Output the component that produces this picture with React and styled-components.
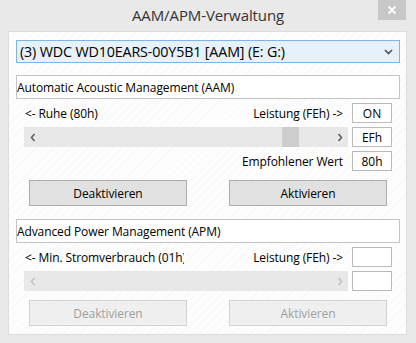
import React from "react";
import styled, { createGlobalStyle } from "styled-components";

const Global = createGlobalStyle`
  html, body { margin: 0; padding: 0; background: #e9e9e9; }
  * { box-sizing: border-box; }
  body { font-family: "Open Sans", "Noto Sans", sans-serif; }
`;

const Window = styled.div`
  width: 416px;
  height: 343px;
  background: #e9e9e9;
  display: flex;
  flex-direction: column;
  overflow: hidden;
`;

const TitleBar = styled.div`
  height: 31px;
  display: grid;
  grid-template-columns: 1fr auto 1fr;
  align-items: start;
`;

const Title = styled.div`
  grid-column: 2;
  font-size: 15px;
  color: #333;
  line-height: 31px;
  letter-spacing: -0.1px;
`;

const CloseButton = styled.div`
  grid-column: 3;
  justify-self: end;
  margin-right: 10px;
  width: 28px;
  height: 20px;
  background: #c7c7c7;
  display: flex;
  align-items: center;
  justify-content: center;
`;

const Client = styled.div`
  flex: 1;
  margin: 0 9px 8px 8px;
  border: 1px solid #dcdcdc;
  background-color: #fdfdfd;
  background-image: repeating-linear-gradient(
    135deg,
    rgba(0, 0, 0, 0) 0px,
    rgba(0, 0, 0, 0) 5px,
    rgba(0, 0, 0, 0.018) 5px,
    rgba(0, 0, 0, 0.018) 6px
  );
  padding: 8px 6px 0 7px;
  display: flex;
  flex-direction: column;
`;

const Combo = styled.div`
  height: 23px;
  border: 1px solid #7eb4ea;
  background: #e5f1fb;
  display: flex;
  align-items: center;
  justify-content: space-between;
  padding: 0 6px 0 3px;
  font-size: 14.3px;
  color: #000;
  letter-spacing: -0.15px;
`;

const GroupHeader = styled.div`
  height: 24px;
  margin-top: ${(p) => p.$top}px;
  border: 1px solid #c4c4c4;
  background: #fff;
  display: flex;
  align-items: center;
  padding-left: 0px;
  font-size: 12px;
  color: #000;
  letter-spacing: -0.1px;
`;

const Grid = styled.div`
  margin: 4px 0 0 8px;
  display: grid;
  grid-template-columns: 324px 40px;
  grid-auto-rows: 20px;
  column-gap: 4px;
  row-gap: 4px;
`;

const LabelRow = styled.div`
  display: flex;
  align-items: center;
  justify-content: ${(p) => (p.$end ? "flex-end" : "space-between")};
  padding: 0 5px 0 1px;
  font-size: 12px;
  color: #000;
  white-space: nowrap;
  letter-spacing: -0.1px;
`;

const Clip = styled.span`
  display: inline-block;
  width: ${(p) => p.$w}px;
  overflow: hidden;
`;

const ValueBox = styled.div`
  border: 1px solid #b9b9b9;
  background: #fff;
  display: flex;
  align-items: center;
  justify-content: center;
  font-size: 12px;
  color: #000;
`;

const Scroll = styled.div`
  background: #e8e8e8;
  display: grid;
  grid-template-columns: 17px 1fr 17px;
  align-items: center;
`;

const Track = styled.div`
  height: 100%;
  display: flex;
  justify-content: flex-start;
`;

const Thumb = styled.div`
  width: 17px;
  height: 100%;
  margin-left: ${(p) => p.$pos}px;
  background: #cdcdcd;
`;

const Arrow = styled.div`
  display: flex;
  justify-content: center;
  align-items: center;
`;

const ButtonRow = styled.div`
  margin: 9px 0 0 13px;
  display: flex;
  gap: 42px;
`;

const Button = styled.div`
  width: 158px;
  height: 26px;
  border: 1px solid ${(p) => (p.$disabled ? "#d2d2d2" : "#adadad")};
  background: ${(p) => (p.$disabled ? "#efefef" : "#e1e1e1")};
  color: ${(p) => (p.$disabled ? "#9f9f9f" : "#000")};
  display: flex;
  align-items: center;
  justify-content: center;
  font-size: 12px;
  letter-spacing: -0.1px;
`;

const Chevron = ({ dir, color }) => (
  <svg width="6" height="9" viewBox="0 0 6 9">
    <path
      d={dir === "left" ? "M4.5 1 L1.5 4.5 L4.5 8" : "M1.5 1 L4.5 4.5 L1.5 8"}
      fill="none"
      stroke={color}
      strokeWidth="1.6"
    />
  </svg>
);

const ScrollBar = ({ disabled, pos }) => {
  const c = disabled ? "#c2c2c2" : "#606060";
  return (
    <Scroll>
      <Arrow>
        <Chevron dir="left" color={c} />
      </Arrow>
      <Track>{!disabled && <Thumb $pos={pos} />}</Track>
      <Arrow>
        <Chevron dir="right" color={c} />
      </Arrow>
    </Scroll>
  );
};

export default function App() {
  return (
    <>
      <Global />
      <Window>
        <TitleBar>
          <Title>AAM/APM-Verwaltung</Title>
          <CloseButton>
            <svg width="10" height="10" viewBox="0 0 10 10">
              <path d="M1.5 1.5 L8.5 8.5 M8.5 1.5 L1.5 8.5" stroke="#fff" strokeWidth="1.8" />
            </svg>
          </CloseButton>
        </TitleBar>
        <Client>
          <Combo>
            <span>(3) WDC WD10EARS-00Y5B1 [AAM] (E: G:)</span>
            <svg width="9" height="6" viewBox="0 0 9 6">
              <path d="M1 1 L4.5 4.5 L8 1" fill="none" stroke="#555" strokeWidth="1.7" />
            </svg>
          </Combo>

          <GroupHeader $top={12}>Automatic Acoustic Management (AAM)</GroupHeader>
          <Grid>
            <LabelRow>
              <span>&lt;- Ruhe (80h)</span>
              <span>Leistung (FEh) -&gt;</span>
            </LabelRow>
            <ValueBox>ON</ValueBox>
            <ScrollBar pos={241} />
            <ValueBox>EFh</ValueBox>
            <LabelRow $end>
              <span>Empfohlener Wert</span>
            </LabelRow>
            <ValueBox>80h</ValueBox>
          </Grid>
          <ButtonRow>
            <Button>Deaktivieren</Button>
            <Button>Aktivieren</Button>
          </ButtonRow>

          <GroupHeader $top={13}>Advanced Power Management (APM)</GroupHeader>
          <Grid>
            <LabelRow>
              <Clip $w={159}>&lt;- Min. Stromverbrauch (01h)</Clip>
              <span>Leistung (FEh) -&gt;</span>
            </LabelRow>
            <ValueBox />
            <ScrollBar disabled />
            <ValueBox />
          </Grid>
          <ButtonRow>
            <Button $disabled>Deaktivieren</Button>
            <Button $disabled>Aktivieren</Button>
          </ButtonRow>
        </Client>
      </Window>
    </>
  );
}
